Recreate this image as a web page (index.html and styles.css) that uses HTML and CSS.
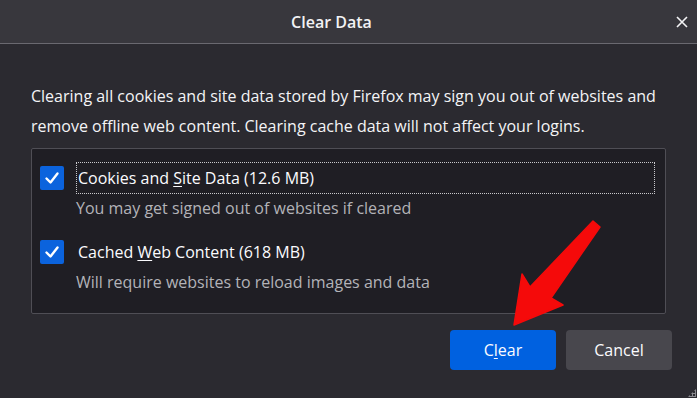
FILE: index.html
```html
<!DOCTYPE html>
<html lang="en">
  <head>
    <meta charset="UTF-8" />
    <title>Clear Data</title>
    <link rel="stylesheet" href="styles.css">
  </head>
  <body>
    <div class="dialog">
      <div class="titlebar">
        <h1>Clear Data</h1>
        <svg class="close" width="14" height="14" viewBox="0 0 14 14">
          <path d="M2 2 L12 12 M12 2 L2 12" stroke="#f4f4f6" stroke-width="1.6" />
        </svg>
      </div>
      <div class="content">
        <p class="intro">Clearing all cookies and site data stored by Firefox may sign you out of websites and remove offline web content. Clearing cache data will not affect your logins.</p>
        <div class="options">
          <div class="option">
            <div class="row">
              <span class="check"><svg width="24" height="24" viewBox="0 0 24 24"><path d="M6.5 12.5 L10.5 16.5 L17.5 7.5" fill="none" stroke="#fff" stroke-width="2.4" stroke-linecap="round" stroke-linejoin="round" /></svg></span>
              <span class="label focused">Cookies and <u>S</u>ite Data (12.6 MB)</span>
            </div>
            <div class="desc">You may get signed out of websites if cleared</div>
          </div>
          <div class="option">
            <div class="row">
              <span class="check"><svg width="24" height="24" viewBox="0 0 24 24"><path d="M6.5 12.5 L10.5 16.5 L17.5 7.5" fill="none" stroke="#fff" stroke-width="2.4" stroke-linecap="round" stroke-linejoin="round" /></svg></span>
              <span class="label">Cached <u>W</u>eb Content (618 MB)</span>
            </div>
            <div class="desc">Will require websites to reload images and data</div>
          </div>
        </div>
        <div class="buttons">
          <button class="btn primary">C<u>l</u>ear</button>
          <button class="btn">Cancel</button>
        </div>
      </div>
      <svg class="arrow" width="697" height="398" viewBox="0 0 697 398">
        <polygon points="593,221 600,227 551,298 563,305 514,325 522,274 530,287" fill="#f50a0a" stroke="#f50a0a" stroke-width="1.5" stroke-linejoin="round" />
      </svg>
      <div class="grip"></div>
    </div>
  </body>
</html>
```

FILE: styles.css
```css
* {
  margin: 0;
  padding: 0;
  box-sizing: border-box;
}
body {
  background: #2b2a30;
  font-family: "Open Sans", "Noto Sans", sans-serif;
  color: #fbfbfe;
  width: 697px;
  height: 398px;
  overflow: hidden;
}
.dialog {
  position: relative;
  height: 398px;
}
.titlebar {
  height: 44px;
  background: #38373d;
  border-bottom: 1px solid #6a6970;
  display: flex;
  align-items: center;
  justify-content: center;
  position: relative;

  h1 {
    font-size: 16px;
    font-weight: 600;
    color: #f2f2f4;
    margin-right: 34px;
  }
  .close {
    position: absolute;
    right: 8px;
    top: 15px;
  }
}
.content {
  padding: 37px 31px 0 31px;
}
.intro {
  font-size: 16px;
  line-height: 30px;
  color: #f4f4f6;
}
.options {
  margin-top: 7px;
  height: 166px;
  border: 1px solid #4f4e55;
  background: #1f1e24;
  border-radius: 2px;
  padding: 13px 10px 0 8px;
}
.option {
  margin-bottom: 14px;
}
.row {
  display: flex;
  align-items: center;
  height: 32px;
}
.check {
  width: 24px;
  height: 24px;
  background: #0b63dd;
  border-radius: 2px;
  display: flex;
  margin-right: 12px;
  flex-shrink: 0;
}
.label {
  flex: 1;
  height: 32px;
  line-height: 30px;
  font-size: 16px;
  padding-left: 1px;
  border: 1px solid transparent;
}
.label.focused {
  border: 1px dotted #c9c9cd;
}
u {
  text-underline-offset: 2px;
}
.desc {
  font-size: 16px;
  color: #b3b3b8;
  padding-left: 36px;
  line-height: 28px;
}
.buttons {
  display: flex;
  justify-content: flex-end;
  gap: 10px;
  margin-top: 16px;
  margin-right: -6px;
}
.btn {
  width: 106px;
  height: 40px;
  border: none;
  border-radius: 4px;
  background: #48474d;
  color: #fbfbfe;
  font-family: "Open Sans", "Noto Sans", sans-serif;
  font-size: 16px;
}
.btn.primary {
  background: #0061e0;
}
.arrow {
  position: absolute;
  left: 0;
  top: 0;
  pointer-events: none;
}
.grip {
  position: absolute;
  right: 1px;
  bottom: 1px;
  width: 8px;
  height: 8px;
  background: radial-gradient(circle, #8a8a8f 1px, transparent 1.2px) 0 0 / 3px 3px;
  clip-path: polygon(100% 0, 100% 100%, 0 100%);
}
```
